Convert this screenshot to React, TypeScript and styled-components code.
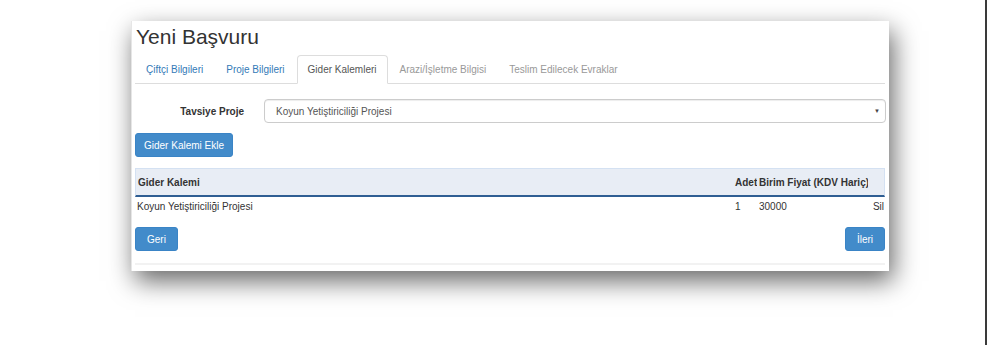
import React from 'react'
import styled, {createGlobalStyle} from 'styled-components'

const GlobalStyle = createGlobalStyle`
  html, body {
    margin: 0;
    padding: 0;
    background: #fff;
  }
  body {
    font-family: "Liberation Sans", Arial, sans-serif;
    font-size: 10px;
    color: #333;
  }
`

const tabs = [
    {label: 'Çiftçi Bilgileri', state: 'link'},
    {label: 'Proje Bilgileri', state: 'link'},
    {label: 'Gider Kalemleri', state: 'active'},
    {label: 'Arazi/İşletme Bilgisi', state: 'disabled'},
    {label: 'Teslim Edilecek Evraklar', state: 'disabled'},
] as const

const rows = [
    {name: 'Koyun Yetiştiriciliği Projesi', count: '1', price: '30000'},
]

export default function App() {
    return (
        <Page>
            <GlobalStyle/>
            <Card>
                <Title>Yeni Başvuru</Title>
                <TabBar>
                    {tabs.map(t => (
                        <Tab key={t.label} $state={t.state}>{t.label}</Tab>
                    ))}
                </TabBar>

                <FormRow>
                    <Label>Tavsiye Proje</Label>
                    <SelectBox>
                        Koyun Yetiştiriciliği Projesi
                        <Caret>▼</Caret>
                    </SelectBox>
                </FormRow>

                <Toolbar>
                    <Button>Gider Kalemi Ekle</Button>
                </Toolbar>

                <Table>
                    <HeadRow>
                        <Cell>Gider Kalemi</Cell>
                        <Cell>Adet</Cell>
                        <Cell>Birim Fiyat (KDV Hariç)</Cell>
                        <Cell/>
                    </HeadRow>
                    {rows.map(r => (
                        <BodyRow key={r.name}>
                            <Cell>{r.name}</Cell>
                            <Cell>{r.count}</Cell>
                            <Cell>{r.price}</Cell>
                            <Cell $right>Sil</Cell>
                        </BodyRow>
                    ))}
                </Table>

                <Footer>
                    <Button $narrow>Geri</Button>
                    <Button $narrow>İleri</Button>
                </Footer>
                <Rule/>
            </Card>
        </Page>
    )
}

const Page = styled.div`
  box-sizing: border-box;
  width: 987px;
  height: 345px;
  padding: 21px 0 0 131px;
  border-right: 2px solid #3a3a3a;
  background: #fff;
  overflow: hidden;
`

const Card = styled.div`
  width: 758px;
  box-sizing: border-box;
  padding: 4px 4px 6px 3px;
  background: #fff;
  border-left: 1px solid #e6e6e6;
  box-shadow: 4px 10px 24px rgba(0, 0, 0, 0.6);
  display: flex;
  flex-direction: column;
`

const Title = styled.h1`
  margin: 0 0 6px 1px;
  font-size: 21px;
  line-height: 24px;
  font-weight: normal;
  color: #333;
`

const TabBar = styled.div`
  display: flex;
  height: 28px;
  border-bottom: 1px solid #ddd;
`

const Tab = styled.div<{ $state: 'link' | 'active' | 'disabled' }>`
  box-sizing: border-box;
  height: 29px;
  padding: 0 10px;
  margin-right: 1px;
  display: flex;
  align-items: center;
  border: 1px solid transparent;
  border-radius: 4px 4px 0 0;
  color: ${p => p.$state === 'link' ? '#337ab7' : p.$state === 'active' ? '#555' : '#999'};
  ${p => p.$state === 'active' && `
    background: #fff;
    border-color: #ddd;
    border-bottom-color: #fff;
  `}
`

const FormRow = styled.div`
  display: grid;
  grid-template-columns: 109px 1fr;
  column-gap: 20px;
  align-items: center;
  margin-top: 15px;
`

const Label = styled.div`
  text-align: right;
  font-weight: bold;
`

const SelectBox = styled.div`
  position: relative;
  box-sizing: border-box;
  height: 24px;
  margin-right: -1px;
  padding: 0 11px;
  display: flex;
  align-items: center;
  border: 1px solid #ccc;
  border-radius: 4px;
  box-shadow: inset 0 1px 1px rgba(0, 0, 0, 0.075);
  color: #555;
`

const Caret = styled.span`
  position: absolute;
  right: 5px;
  top: 8px;
  font-size: 6px;
  color: #444;
`

const Toolbar = styled.div`
  display: flex;
  margin-top: 10px;
`

const Button = styled.button<{ $narrow?: boolean }>`
  box-sizing: border-box;
  height: 24px;
  padding: 0 ${p => p.$narrow ? '11px' : '8px'};
  border: 1px solid #3a84c6;
  border-radius: 3px;
  background: #428bca;
  color: #fff;
  font-family: "Liberation Sans", Arial, sans-serif;
  font-size: 10px;
`

const Table = styled.div`
  margin-top: 11px;
  display: grid;
  grid-template-columns: 1fr 24px 111px 17px;
`

const HeadRow = styled.div`
  display: contents;

  & > div {
    height: 26px;
    background: #e8edf5;
    border-top: 1px solid #d4e1f2;
    border-bottom: 2px solid #2f5e93;
    font-weight: bold;
  }

  & > div:first-child {
    border-left: 1px solid #d4e1f2;
  }

  & > div:last-child {
    border-right: 1px solid #d4e1f2;
  }
`

const BodyRow = styled.div`
  display: contents;

  & > div {
    height: 18px;
  }
`

const Cell = styled.div<{ $right?: boolean }>`
  display: flex;
  align-items: center;
  justify-content: ${p => p.$right ? 'flex-end' : 'flex-start'};
  padding: 0 ${p => p.$right ? '1px' : '0'} 0 2px;
  white-space: nowrap;
`

const Footer = styled.div`
  display: flex;
  justify-content: space-between;
  margin-top: 12px;
`

const Rule = styled.div`
  height: 2px;
  margin-top: 12px;
  background: #f2f2f2;
`
